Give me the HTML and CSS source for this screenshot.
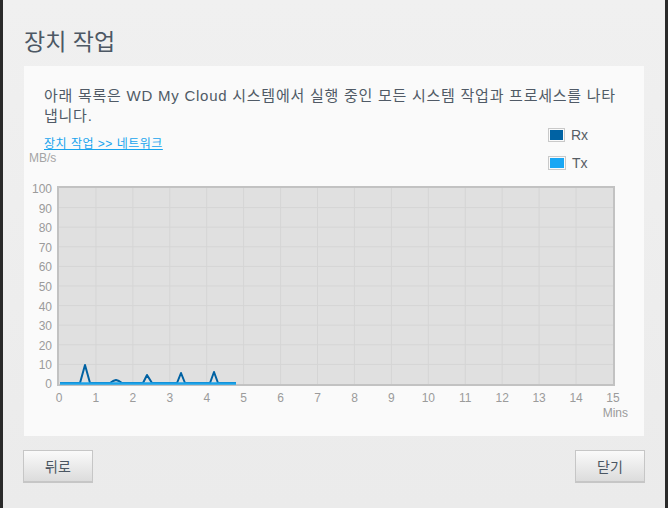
FILE: index.html
```html
<!DOCTYPE html>
<html lang="ko">
<head>
<meta charset="utf-8">
<title>장치 작업</title>
<link rel="stylesheet" href="styles.css">
</head>
<body>
<div class="dialog">
  <h1 class="title">장치 작업</h1>
  <div class="panel">
    <p class="desc">아래 목록은 WD My Cloud 시스템에서 실행 중인 모든 시스템 작업과 프로세스를 나타냅니다.</p>
    <div class="meta">
      <div class="meta-left">
        <a class="crumb" href="#">장치 작업 &gt;&gt; 네트워크</a>
        <div class="unit">MB/s</div>
      </div>
      <ul class="legend">
        <li class="legend-item"><span class="swatch swatch-rx"></span>Rx</li>
        <li class="legend-item"><span class="swatch swatch-tx"></span>Tx</li>
      </ul>
    </div>
    <svg class="chart" width="620" height="250" viewBox="0 0 620 250" xmlns="http://www.w3.org/2000/svg">
      <rect x="34" y="17" width="556" height="198" fill="#e0e0e0" stroke="#c2c2c2" stroke-width="2"/>
      <g stroke="#d5d5d5" stroke-width="1">
        <line x1="71.93" y1="18" x2="71.93" y2="214"/>
        <line x1="108.87" y1="18" x2="108.87" y2="214"/>
        <line x1="145.8" y1="18" x2="145.8" y2="214"/>
        <line x1="182.73" y1="18" x2="182.73" y2="214"/>
        <line x1="219.67" y1="18" x2="219.67" y2="214"/>
        <line x1="256.6" y1="18" x2="256.6" y2="214"/>
        <line x1="293.53" y1="18" x2="293.53" y2="214"/>
        <line x1="330.47" y1="18" x2="330.47" y2="214"/>
        <line x1="367.4" y1="18" x2="367.4" y2="214"/>
        <line x1="404.33" y1="18" x2="404.33" y2="214"/>
        <line x1="441.27" y1="18" x2="441.27" y2="214"/>
        <line x1="478.2" y1="18" x2="478.2" y2="214"/>
        <line x1="515.13" y1="18" x2="515.13" y2="214"/>
        <line x1="552.07" y1="18" x2="552.07" y2="214"/>
        <line x1="35" y1="37.6" x2="589" y2="37.6"/>
        <line x1="35" y1="57.2" x2="589" y2="57.2"/>
        <line x1="35" y1="76.8" x2="589" y2="76.8"/>
        <line x1="35" y1="96.4" x2="589" y2="96.4"/>
        <line x1="35" y1="116" x2="589" y2="116"/>
        <line x1="35" y1="135.6" x2="589" y2="135.6"/>
        <line x1="35" y1="155.2" x2="589" y2="155.2"/>
        <line x1="35" y1="174.8" x2="589" y2="174.8"/>
        <line x1="35" y1="194.4" x2="589" y2="194.4"/>
      </g>
      <g class="axis" text-anchor="end">
        <text x="28" y="19">100</text>
        <text x="28" y="38.6">90</text>
        <text x="28" y="58.2">80</text>
        <text x="28" y="77.8">70</text>
        <text x="28" y="97.4">60</text>
        <text x="28" y="117">50</text>
        <text x="28" y="136.6">40</text>
        <text x="28" y="156.2">30</text>
        <text x="28" y="175.8">20</text>
        <text x="28" y="195.4">10</text>
        <text x="28" y="214">0</text>
      </g>
      <g class="axis" text-anchor="middle">
        <text x="35" y="228">0</text>
        <text x="71.93" y="228">1</text>
        <text x="108.87" y="228">2</text>
        <text x="145.8" y="228">3</text>
        <text x="182.73" y="228">4</text>
        <text x="219.67" y="228">5</text>
        <text x="256.6" y="228">6</text>
        <text x="293.53" y="228">7</text>
        <text x="330.47" y="228">8</text>
        <text x="367.4" y="228">9</text>
        <text x="404.33" y="228">10</text>
        <text x="441.27" y="228">11</text>
        <text x="478.2" y="228">12</text>
        <text x="515.13" y="228">13</text>
        <text x="552.07" y="228">14</text>
        <text x="589" y="228">15</text>
      </g>
      <text class="axis" x="604" y="243" text-anchor="end">Mins</text>
      <polyline fill="none" stroke="#0062a3" stroke-width="2" stroke-linejoin="round"
        points="36,213 56,213 61,195 66,213 86,213 89,211 92,210 95,211 98,213 119,213 123,205 128,213 153,213 157,203 161,213 186,213 190,202 194,213 212,213"/>
      <polyline fill="none" stroke="#1ba3ea" stroke-width="2.5" points="36,213.5 212,213.5"/>
    </svg>
  </div>
  <div class="actions">
    <button class="btn" type="button">뒤로</button>
    <button class="btn" type="button">닫기</button>
  </div>
</div>
</body>
</html>
```

FILE: styles.css
```css
* { box-sizing: border-box; }

html, body {
  margin: 0;
  padding: 0;
  height: 100%;
}

body {
  background: #2a2a2a;
  font-family: "Liberation Sans", "Noto Sans CJK KR", sans-serif;
  color: #4b5662;
}

.dialog {
  margin: 0 3px;
  height: 508px;
  padding: 25px 20px 0 20px;
  background: linear-gradient(#f0f0f0, #ebebeb);
}

.title {
  margin: 0 0 11px 1px;
  font-family: "Noto Sans CJK KR", sans-serif;
  font-weight: 400;
  font-size: 23px;
  line-height: 30px;
  color: #4d5864;
}

.panel {
  margin: 0 1px;
  background: #fafafa;
  padding: 20px 0 16px 0;
}

.desc {
  margin: 0 24px 0 20px;
  font-size: 15px;
  line-height: 20px;
  letter-spacing: 0.75px;
  color: #505a66;
}

.meta {
  display: flex;
  justify-content: space-between;
  align-items: flex-start;
  height: 44px;
}

.meta-left {
  display: flex;
  flex-direction: column;
  align-items: flex-start;
  padding-top: 10px;
}

.crumb {
  margin-left: 20px;
  font-size: 12px;
  line-height: 16px;
  letter-spacing: 0.5px;
  color: #17a4ee;
  text-decoration: underline;
}

.unit {
  margin-left: 5px;
  font-size: 12px;
  line-height: 12px;
  color: #a4a4a4;
}

.legend {
  list-style: none;
  margin: 2px 56px 0 0;
  padding: 0;
  display: flex;
  flex-direction: column;
  gap: 14px;
  width: 40px;
}

.legend-item {
  display: flex;
  align-items: center;
  gap: 6px;
  height: 14px;
  font-size: 14px;
  color: #565d64;
}

.swatch {
  width: 18px;
  height: 14px;
  border: 1px solid #c9c9c9;
  padding: 1px;
  background-clip: content-box;
}

.swatch-rx { background-color: #0062a3; }
.swatch-tx { background-color: #19a7f4; }

.chart {
  display: block;
}

.axis {
  font-family: "Liberation Sans", sans-serif;
  font-size: 12px;
  fill: #9b9b9b;
  dominant-baseline: central;
}

.actions {
  display: flex;
  justify-content: space-between;
  margin-top: 14px;
}

.btn {
  width: 70px;
  height: 33px;
  border: 1px solid #c6c6c6;
  border-bottom-width: 2px;
  background: linear-gradient(#fafafa, #dcdcdc);
  font-family: "Noto Sans CJK KR", sans-serif;
  font-size: 14px;
  color: #4b5662;
  padding: 0;
}
```
